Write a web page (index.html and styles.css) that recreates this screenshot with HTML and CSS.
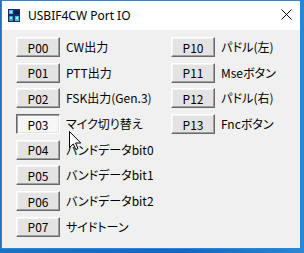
FILE: index.html
```html
<!DOCTYPE html>
<html lang="ja">
<head>
<meta charset="utf-8">
<title>USBIF4CW Port IO</title>
<link rel="stylesheet" href="styles.css">
</head>
<body>
<div class="desktop">
  <div class="window">
    <div class="titlebar">
      <svg class="app-icon" width="12" height="13" viewBox="0 0 12 13">
        <rect x="0" y="0" width="12" height="13" fill="#1b2a6b"/>
        <path d="M1 1h4v4h-4z" fill="#35c6d8"/>
        <path d="M1 7h4v5h-4z" fill="#2aa6c4"/>
        <path d="M7 7h4v5h-4z" fill="#35c6d8"/>
        <path d="M6 2h5v3h-5z" fill="#0f1b4d"/>
        <path d="M2 2h2v2h-2zM2 8h2v2h-2zM8 8h2v2h-2z" fill="#9ff0f5"/>
      </svg>
      <span class="title">USBIF4CW Port IO</span>
      <svg class="close" width="11" height="11" viewBox="0 0 11 11">
        <path d="M0.5 0.5L10.5 10.5M10.5 0.5L0.5 10.5" stroke="#000" stroke-width="1"/>
      </svg>
    </div>
    <div class="client">
      <div class="col col-left">
        <div class="row"><span class="btn">P00</span><span class="label">CW出力</span></div>
        <div class="row"><span class="btn">P01</span><span class="label">PTT出力</span></div>
        <div class="row"><span class="btn">P02</span><span class="label">FSK出力(Gen.3)</span></div>
        <div class="row"><span class="btn pressed">P03</span><span class="label">マイク切り替え</span></div>
        <div class="row"><span class="btn">P04</span><span class="label">バンドデータbit0</span></div>
        <div class="row"><span class="btn">P05</span><span class="label">バンドデータbit1</span></div>
        <div class="row"><span class="btn">P06</span><span class="label">バンドデータbit2</span></div>
        <div class="row"><span class="btn">P07</span><span class="label">サイドトーン</span></div>
      </div>
      <div class="col col-right">
        <div class="row"><span class="btn">P10</span><span class="label">パドル(左)</span></div>
        <div class="row"><span class="btn">P11</span><span class="label">Mseボタン</span></div>
        <div class="row"><span class="btn">P12</span><span class="label">パドル(右)</span></div>
        <div class="row"><span class="btn">P13</span><span class="label">Fncボタン</span></div>
      </div>
    </div>
    <svg class="cursor" width="13" height="20" viewBox="0 0 13 20">
      <path d="M0.5 0.5L0.5 16.5L4.3 12.9L6.8 18.6L9 17.6L6.6 12H11.8Z" fill="#fff" stroke="#000" stroke-width="1" stroke-linejoin="miter"/>
    </svg>
  </div>
</div>
</body>
</html>
```
FILE: styles.css
```css
html, body {
  margin: 0;
  padding: 0;
}
body {
  width: 304px;
  height: 253px;
  overflow: hidden;
  background: #1567bd;
}
.desktop {
  width: 304px;
  height: 253px;
  background: linear-gradient(90deg, #1d72c6 0%, #1467bd 60%, #2a86d6 100%);
  padding: 0 0 0 1px;
  box-sizing: border-box;
}
.window {
  position: relative;
  width: 300px;
  height: 249px;
  box-sizing: border-box;
  border: 1px solid #2a86d6;
  background: #f0f0f0;
  font-family: "Noto Sans CJK JP", "Noto Sans", sans-serif;
  font-size: 12px;
  color: #000;
}
.titlebar {
  height: 29px;
  background: #fff;
  display: flex;
  align-items: center;
  padding-left: 6px;
}
.app-icon {
  flex: none;
  margin-top: -1px;
}
.title {
  font-family: "Noto Sans", sans-serif;
  font-size: 12px;
  margin-left: 8px;
  margin-top: -1px;
  color: #000;
}
.close {
  margin-left: auto;
  margin-right: 8px;
  margin-top: -2px;
}
.client {
  display: flex;
  padding: 7px 0 0 14px;
  gap: 6px;
}
.col {
  display: flex;
  flex-direction: column;
  gap: 5.7px;
}
.col-left {
  width: 149px;
}
.row {
  display: flex;
  align-items: center;
  height: 20px;
  gap: 6px;
}
.btn {
  flex: none;
  box-sizing: border-box;
  width: 44px;
  height: 20px;
  display: flex;
  align-items: center;
  justify-content: center;
  background: #e3e3e3;
  border-top: 1px solid #ffffff;
  border-left: 1px solid #ffffff;
  border-right: 1px solid #696969;
  border-bottom: 1px solid #696969;
  box-shadow: inset -1px -1px 0 #a0a0a0, inset 1px 1px 0 #f4f4f4;
  font-size: 12px;
  line-height: 1;
  padding-top: 1px;
}
.btn.pressed {
  background: #f7f7f7;
  border-top: 1px solid #696969;
  border-left: 1px solid #696969;
  border-right: 1px solid #ffffff;
  border-bottom: 1px solid #ffffff;
  box-shadow: inset 1px 1px 0 #a0a0a0, inset -1px -1px 0 #e3e3e3;
}
.label {
  white-space: nowrap;
  line-height: 1;
  font-feature-settings: "palt";
}
.cursor {
  position: absolute;
  left: 67px;
  top: 130px;
}
```
